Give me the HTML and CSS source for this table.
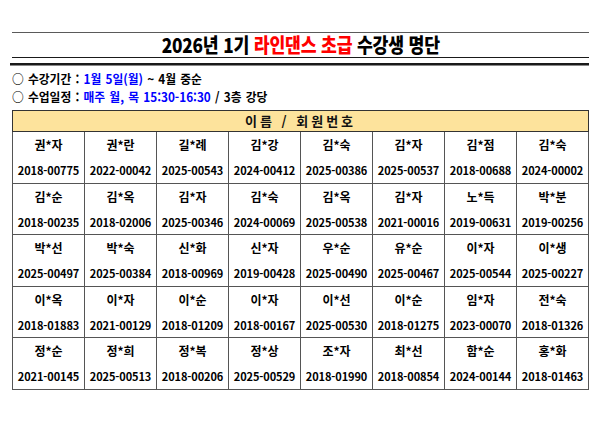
FILE: index.html
```html
<!DOCTYPE html>
<html lang="ko">
<head>
<meta charset="utf-8">
<link rel="stylesheet" href="styles.css">
</head>
<body>
<div class="page">
  <div class="title"><span class="title-text">2026년 1기 <span class="red">라인댄스 초급</span> 수강생 명단</span></div>
  <div class="rule"></div>
  <div class="info">
    <div class="info-line"><span class="info-text">○ 수강기간 : <span class="blue">1월 5일(월)</span> ~ 4월 중순</span></div>
    <div class="info-line"><span class="info-text">○ 수업일정 : <span class="blue">매주 월, 목 15:30-16:30</span> / 3층 강당</span></div>
  </div>
  <table class="roster">
    <thead>
      <tr><th colspan="8">이름 / 회원번호</th></tr>
    </thead>
    <tbody>
      <tr>
        <td><div class="nm">권*자</div><div class="id">2018-00775</div></td>
        <td><div class="nm">권*란</div><div class="id">2022-00042</div></td>
        <td><div class="nm">길*례</div><div class="id">2025-00543</div></td>
        <td><div class="nm">김*강</div><div class="id">2024-00412</div></td>
        <td><div class="nm">김*숙</div><div class="id">2025-00386</div></td>
        <td><div class="nm">김*자</div><div class="id">2025-00537</div></td>
        <td><div class="nm">김*점</div><div class="id">2018-00688</div></td>
        <td><div class="nm">김*숙</div><div class="id">2024-00002</div></td>
      </tr>
      <tr>
        <td><div class="nm">김*순</div><div class="id">2018-00235</div></td>
        <td><div class="nm">김*옥</div><div class="id">2018-02006</div></td>
        <td><div class="nm">김*자</div><div class="id">2025-00346</div></td>
        <td><div class="nm">김*숙</div><div class="id">2024-00069</div></td>
        <td><div class="nm">김*옥</div><div class="id">2025-00538</div></td>
        <td><div class="nm">김*자</div><div class="id">2021-00016</div></td>
        <td><div class="nm">노*득</div><div class="id">2019-00631</div></td>
        <td><div class="nm">박*분</div><div class="id">2019-00256</div></td>
      </tr>
      <tr>
        <td><div class="nm">박*선</div><div class="id">2025-00497</div></td>
        <td><div class="nm">박*숙</div><div class="id">2025-00384</div></td>
        <td><div class="nm">신*화</div><div class="id">2018-00969</div></td>
        <td><div class="nm">신*자</div><div class="id">2019-00428</div></td>
        <td><div class="nm">우*순</div><div class="id">2025-00490</div></td>
        <td><div class="nm">유*순</div><div class="id">2025-00467</div></td>
        <td><div class="nm">이*자</div><div class="id">2025-00544</div></td>
        <td><div class="nm">이*생</div><div class="id">2025-00227</div></td>
      </tr>
      <tr>
        <td><div class="nm">이*옥</div><div class="id">2018-01883</div></td>
        <td><div class="nm">이*자</div><div class="id">2021-00129</div></td>
        <td><div class="nm">이*순</div><div class="id">2018-01209</div></td>
        <td><div class="nm">이*자</div><div class="id">2018-00167</div></td>
        <td><div class="nm">이*선</div><div class="id">2025-00530</div></td>
        <td><div class="nm">이*순</div><div class="id">2018-01275</div></td>
        <td><div class="nm">임*자</div><div class="id">2023-00070</div></td>
        <td><div class="nm">전*숙</div><div class="id">2018-01326</div></td>
      </tr>
      <tr>
        <td><div class="nm">정*순</div><div class="id">2021-00145</div></td>
        <td><div class="nm">정*희</div><div class="id">2025-00513</div></td>
        <td><div class="nm">정*복</div><div class="id">2018-00206</div></td>
        <td><div class="nm">정*상</div><div class="id">2025-00529</div></td>
        <td><div class="nm">조*자</div><div class="id">2018-01990</div></td>
        <td><div class="nm">최*선</div><div class="id">2018-00854</div></td>
        <td><div class="nm">함*순</div><div class="id">2024-00144</div></td>
        <td><div class="nm">홍*화</div><div class="id">2018-01463</div></td>
      </tr>
    </tbody>
  </table>
</div>
</body>
</html>
```

FILE: styles.css
```css
html, body {
  margin: 0;
  padding: 0;
  background: #ffffff;
}
body {
  font-family: "Noto Sans CJK KR", "Noto Sans", sans-serif;
  color: #000;
}
.page {
  width: 577px;
  margin-left: 12px;
  padding-top: 32px;
}
.title {
  border-top: 1px solid #5a5a5a;
  border-bottom: 1px solid #1a1a1a;
  height: 24px;
  display: flex;
  justify-content: center;
  align-items: center;
}
.title-text {
  display: inline-block;
  font-size: 20px;
  font-weight: 900;
  line-height: 22px;
  letter-spacing: -0.2px;
  transform: scaleX(0.86);
  white-space: nowrap;
}
.red { color: #ff0000; }
.blue { color: #0000ff; }
.rule {
  margin-top: 5px;
  margin-left: -2px;
  height: 2px;
  background: #1a1a1a;
  border-bottom: 1px solid #888;
}
.info {
  margin-top: 4px;
}
.info-line {
  height: 18px;
  display: flex;
  align-items: center;
}
.info-text {
  display: inline-block;
  font-size: 12.5px;
  font-weight: 700;
  line-height: 18px;
  white-space: nowrap;
  word-spacing: 1px;
  transform: scaleX(0.94);
  transform-origin: left center;
}
.roster {
  margin-top: 4px;
  width: 577px;
  border-collapse: collapse;
  table-layout: fixed;
  border: 1px solid #333;
}
.roster th {
  background: #fde39c;
  height: 20px;
  padding: 0;
  font-size: 13px;
  font-weight: 700;
  letter-spacing: 3px;
  line-height: 20px;
  border: 1px solid #333;
  color: #111;
}
.roster td {
  width: 72px;
  height: 50.6px;
  padding: 0;
  border: 1px solid #555;
  text-align: center;
  vertical-align: top;
}
.nm {
  font-size: 12px;
  font-weight: 700;
  line-height: 26px;
}
.id {
  font-size: 11px;
  font-weight: 700;
  line-height: 24px;
  letter-spacing: -0.1px;
}
```
